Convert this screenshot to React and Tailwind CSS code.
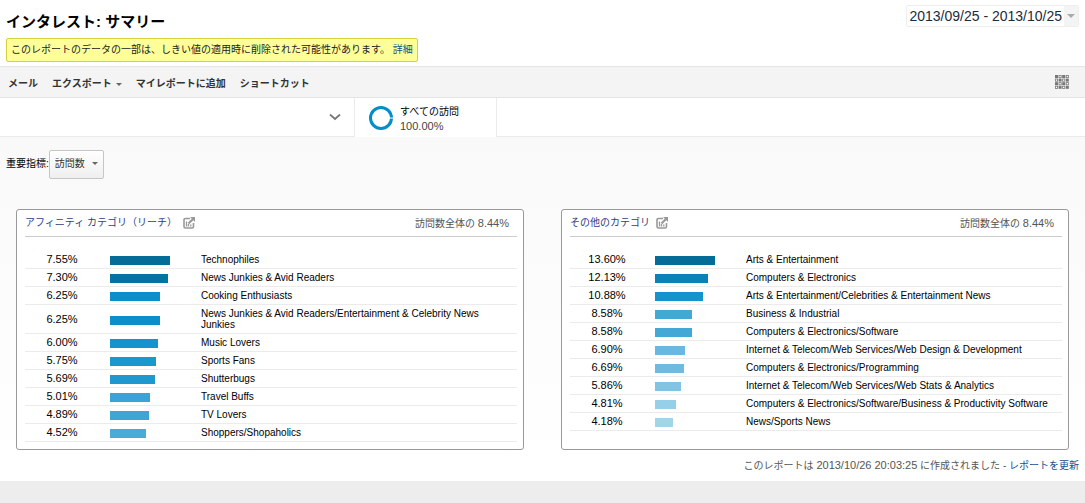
import React, { useState } from 'react';

const affinity = [
  { pct: '7.55%', bar: 60, color: '#056b97', label: 'Technophiles' },
  { pct: '7.30%', bar: 58, color: '#0472a2', label: 'News Junkies & Avid Readers' },
  { pct: '6.25%', bar: 50, color: '#0b8fca', label: 'Cooking Enthusiasts' },
  { pct: '6.25%', bar: 50, color: '#0b8fca', label: 'News Junkies & Avid Readers/Entertainment & Celebrity News Junkies' },
  { pct: '6.00%', bar: 48, color: '#1493cc', label: 'Music Lovers' },
  { pct: '5.75%', bar: 46, color: '#1b97ce', label: 'Sports Fans' },
  { pct: '5.69%', bar: 45, color: '#1e98ce', label: 'Shutterbugs' },
  { pct: '5.01%', bar: 40, color: '#3aa4d4', label: 'Travel Buffs' },
  { pct: '4.89%', bar: 39, color: '#3ea6d5', label: 'TV Lovers' },
  { pct: '4.52%', bar: 36, color: '#4baad7', label: 'Shoppers/Shopaholics' },
];

const others = [
  { pct: '13.60%', bar: 60, color: '#056b97', label: 'Arts & Entertainment' },
  { pct: '12.13%', bar: 53, color: '#0783b9', label: 'Computers & Electronics' },
  { pct: '10.88%', bar: 48, color: '#1493cc', label: 'Arts & Entertainment/Celebrities & Entertainment News' },
  { pct: '8.58%', bar: 37, color: '#43a8d5', label: 'Business & Industrial' },
  { pct: '8.58%', bar: 37, color: '#43a8d5', label: 'Computers & Electronics/Software' },
  { pct: '6.90%', bar: 30, color: '#69b9de', label: 'Internet & Telecom/Web Services/Web Design & Development' },
  { pct: '6.69%', bar: 29, color: '#6ebbdf', label: 'Computers & Electronics/Programming' },
  { pct: '5.86%', bar: 26, color: '#7fc4e2', label: 'Internet & Telecom/Web Services/Web Stats & Analytics' },
  { pct: '4.81%', bar: 21, color: '#96cfe8', label: 'Computers & Electronics/Software/Business & Productivity Software' },
  { pct: '4.18%', bar: 18, color: '#a3d4ea', label: 'News/Sports News' },
];

const Caret = ({ className }) => (
  <svg viewBox="0 0 6 3" className={className} aria-hidden="true">
    <path d="M0 0h6L3 3z" fill="currentColor" />
  </svg>
);

const ReportIcon = () => (
  <svg viewBox="0 0 12 12" className="h-3 w-3 text-[#999]" fill="none" stroke="currentColor" aria-hidden="true">
    <path d="M7 1.500H2.500a1.500 1.500 0 0 0-1.500 1.500v6.500A1.500 1.500 0 0 0 2.500 11h6.500a1.500 1.500 0 0 0 1.500-1.500V6" strokeWidth="1.600" />
    <path d="M3.500 9.500v-5M5.500 9.500V7M7.800 9.500V7.500" strokeWidth="1.300" />
    <path d="M5.500 6.500l4.500-4.500" strokeWidth="2.200" />
    <path d="M7 0h5v5z" fill="currentColor" stroke="none" />
  </svg>
);

// 4x4 grid of alternating filled and hollow dots
const GridIcon = () => (
  <svg viewBox="0 0 14 14" className="h-3.5 w-3.5 text-[#777]" aria-hidden="true">
    {[0, 1, 2, 3].map((row) =>
      [0, 1, 2, 3].map((col) => {
        const hollow = (row + col) % 2 === 1;
        return (
          <rect
            key={`${row}-${col}`}
            x={col * 3.6 + (hollow ? 0.4 : 0)}
            y={row * 3.6 + (hollow ? 0.4 : 0)}
            width={hollow ? 2.2 : 3}
            height={hollow ? 2.2 : 3}
            fill={hollow ? '#fff' : 'currentColor'}
            stroke={hollow ? 'currentColor' : 'none'}
            strokeWidth="0.8"
          />
        );
      })
    )}
  </svg>
);

const CategoryCard = ({ title, rows }) => (
  <section className="rounded-[3px] border border-[#999] bg-white pr-1.5 pb-[7px] pl-2">
    <header className="flex h-[27px] items-center justify-between border-b border-[#ccc] pr-2">
      <h2 className="flex items-center gap-1.5">
        <a href="#report" className="text-[#333b85]">{title}</a>
        <ReportIcon />
      </h2>
      <p className="text-[#555]">
        訪問数全体の <span className="text-[11px]">8.44%</span>
      </p>
    </header>
    <table className="mt-3.5 w-full table-fixed border-separate border-spacing-0 leading-[11px] text-black">
      <colgroup>
        <col className="w-[74px]" />
        <col className="w-[102px]" />
        <col />
      </colgroup>
      <tbody>
        {rows.map((row) => (
          <tr key={row.label}>
            <td className="border-b border-[#ebebeb] py-[3px] text-center text-[11px]">{row.pct}</td>
            <td className="border-b border-[#ebebeb] pt-0.5 pl-[11px]">
              <div className="h-[9px]" style={{ width: row.bar, backgroundColor: row.color }} />
            </td>
            <td className="border-b border-[#ebebeb] py-[3px] pr-2">{row.label}</td>
          </tr>
        ))}
      </tbody>
    </table>
  </section>
);

const App = () => {
  const [metric, setMetric] = useState('visits');

  return (
    <div className="min-h-screen bg-[#ededed] font-['Liberation_Sans','Noto_Sans_CJK_JP',sans-serif] text-[10px] leading-[14px] text-[#222]">
      <header className="flex items-start justify-between bg-white pt-[5px] pr-1.5 pb-1 pl-1.5">
        <div>
          <h1 className="mt-[7px] text-[15px] leading-5 font-bold text-black">インタレスト: サマリー</h1>
          <p className="mt-1.5 rounded-xs border border-[#d8d03c] bg-[#ffff99] px-1 py-1">
            このレポートのデータの一部は、しきい値の適用時に削除された可能性があります。{' '}
            <a href="#details" className="text-[#15508f]">詳細</a>
          </p>
        </div>
        <button type="button" className="flex h-[22px] items-stretch rounded-xs border border-[#eee] text-[14px] leading-5 text-[#1c2b3c]">
          <span className="px-0.5">2013/09/25 - 2013/10/25</span>
          <span className="flex w-3.5 items-center justify-center bg-[#f4f4f4] text-[#aaa]">
            <Caret className="h-1 w-2" />
          </span>
        </button>
      </header>

      <nav className="flex h-8 items-center justify-between border-y border-[#e4e4e4] bg-[#f4f4f4] pr-4 pl-2 font-bold text-[#333]">
        <div className="flex items-center gap-3.5 pt-[3px]">
          <button type="button">メール</button>
          <button type="button" className="flex items-center gap-1">
            エクスポート
            <Caret className="mt-0.5 h-[3px] w-[6px] text-[#666]" />
          </button>
          <button type="button">マイレポートに追加</button>
          <button type="button">ショートカット</button>
        </div>
        <button type="button" aria-label="表示">
          <GridIcon />
        </button>
      </nav>

      <div className="flex h-[39px] bg-white">
        <button type="button" aria-label="セグメント" className="flex w-[355px] items-center justify-end border-r border-b border-[#ebebeb] pr-[13px]">
          <svg viewBox="0 0 12 8" className="h-2 w-3" fill="none" stroke="#777" strokeWidth="1.700" aria-hidden="true">
            <path d="M1 1.500l5 4.500 5-4.500" />
          </svg>
        </button>
        <div className="flex w-[142px] items-center gap-[7px] border-r border-[#ebebeb] pl-3.5">
          <svg viewBox="0 0 24 24" className="h-6 w-6" fill="none" aria-hidden="true">
            <circle cx="12" cy="12" r="10.500" stroke="#058dc7" strokeWidth="3" />
            <path d="M20 12h4" stroke="#fff" strokeWidth="1" />
          </svg>
          <div className="pt-0.5">
            <p className="text-black">すべての訪問</p>
            <p className="text-[11px] text-[#444]">100.00%</p>
          </div>
        </div>
        <div className="flex-1 border-b border-[#ebebeb]" />
      </div>

      <main className="bg-linear-to-b from-[#f9f9f9] to-white pt-[13px] pb-2">
        <div className="flex items-center pl-1.5">
          <label htmlFor="metric" className="pb-0.5 text-black">重要指標:</label>
          <div className="relative">
            <select
              id="metric"
              value={metric}
              onChange={(e) => setMetric(e.target.value)}
              className="h-[29px] w-[55px] appearance-none rounded-xs border border-[#c6c6c6] bg-linear-to-b from-white to-[#efefef] pb-0.5 pl-[5px] text-[#333]"
            >
              <option value="visits">訪問数</option>
            </select>
            <Caret className="pointer-events-none absolute top-3 right-1.5 h-[3px] w-[6px] text-[#666]" />
          </div>
        </div>

        <div className="mt-[30px] grid grid-cols-2 gap-[37px] px-4">
          <CategoryCard title="アフィニティ カテゴリ（リーチ）" rows={affinity} />
          <CategoryCard title="その他のカテゴリ" rows={others} />
        </div>

        <p className="mt-2 pr-1.5 text-right text-[#555]">
          このレポートは <span className="text-[11px]">2013/10/26 20:03:25</span> に作成されました -{' '}
          <a href="#refresh" className="text-[#15508f]">レポートを更新</a>
        </p>
      </main>
    </div>
  );
};

export default App;
